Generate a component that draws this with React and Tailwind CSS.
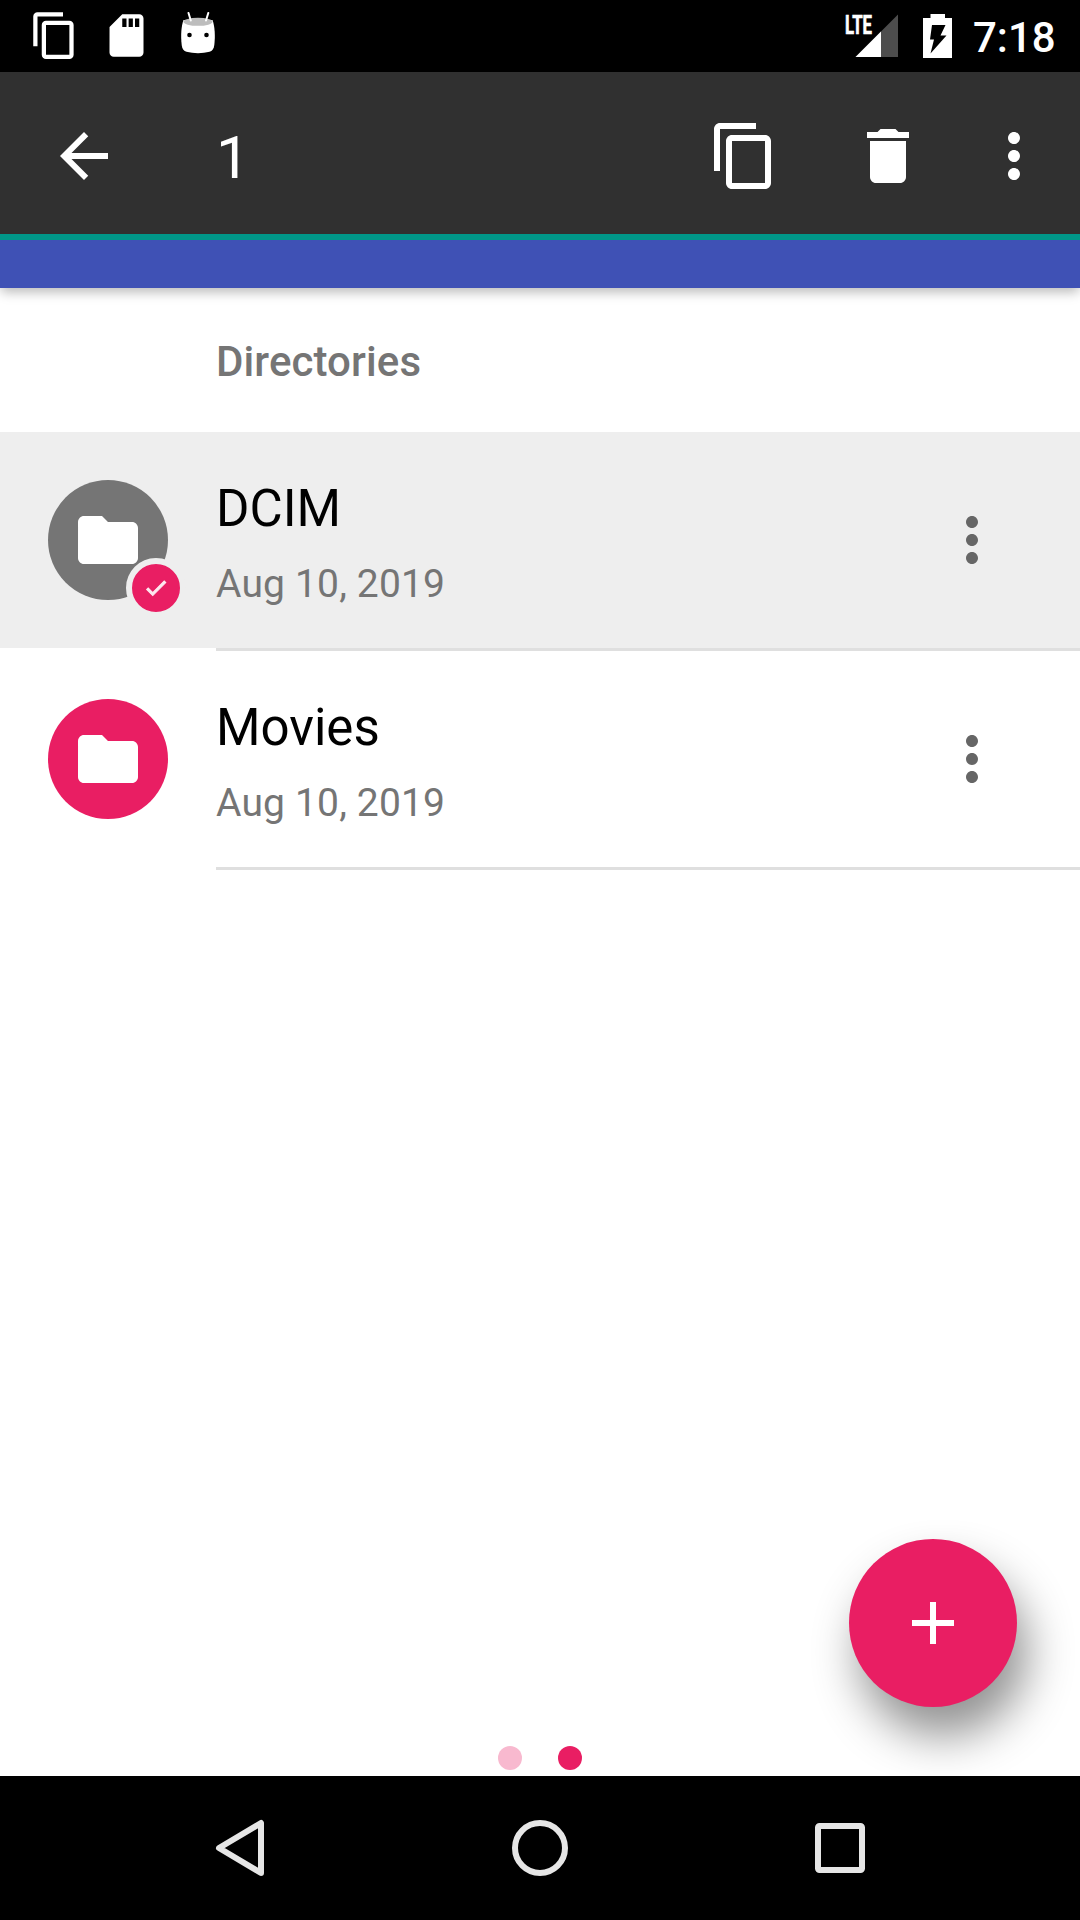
import React from "react";

function Svg({ children, className, box = "0 0 24 24" }) {
  return (
    <svg viewBox={box} fill="currentColor" className={"block shrink-0 " + className}>
      {children}
    </svg>
  );
}

const COPY =
  "M16 1H4c-1.1 0-2 .9-2 2v14h2V3h12V1zm3 4H8c-1.1 0-2 .9-2 2v14c0 1.1.9 2 2 2h11c1.1 0 2-.9 2-2V7c0-1.1-.9-2-2-2zm0 16H8V7h11v14z";
const MORE =
  "M12 8c1.1 0 2-.9 2-2s-.9-2-2-2-2 .9-2 2 .9 2 2 2zm0 2c-1.1 0-2 .9-2 2s.9 2 2 2 2-.9 2-2-.9-2-2-2zm0 6c-1.1 0-2 .9-2 2s.9 2 2 2 2-.9 2-2-.9-2-2-2z";

function StatusBar() {
  return (
    <div className="flex h-[72px] items-center bg-black pl-[28.5px] pr-[24px] text-white">
      <Svg className="mb-px size-[51px]">
        <path d={COPY} />
      </Svg>
      <Svg className="mb-px ml-[21px] size-[51px]">
        <path d="M18 2h-8L4.02 8 4 20c0 1.1.9 2 2 2h12c1.1 0 2-.9 2-2V4c0-1.1-.9-2-2-2zm-6 6h-2V4h2v4zm3 0h-2V4h2v4zm3 0h-2V4h2v4z" />
      </Svg>
      <Svg box="0 0 36 42" className="ml-[28.5px] mb-[6px] h-[42px] w-[36px]">
        <path d="M3.500 8C1.200 14 .6 24 1.700 33c.5 4 2 6 4.800 6.800 7 1.800 16 1.800 23 0 2.800-.8 4.300-2.800 4.800-6.800C35.400 24 34.800 14 32.500 8z" />
        <ellipse cx="18" cy="9.800" rx="14.600" ry="4" fill="#bdbdbd" />
        <path d="M8.500 1l2.300 7.500M28.300 1L26 8.500" stroke="currentColor" strokeWidth="2" strokeLinecap="round" />
        <circle cx="9.500" cy="23" r="2.300" fill="#000" />
        <circle cx="26.500" cy="23" r="2.300" fill="#000" />
      </Svg>
      <div className="flex-1" />
      <Svg box="-3 -14 57 72" className="h-[72px] w-[57px]">
        <path d="M53 0.500V43H10.500z" fill="#4d4d4d" />
        <path d="M36 17.500V43H10.500z" />
        <text
          x="0"
          y="19.500"
          textLength="27"
          lengthAdjust="spacingAndGlyphs"
          fontFamily="Roboto, sans-serif"
          fontWeight="700"
          fontSize="26"
          stroke="currentColor"
          strokeWidth="0.7"
        >
          LTE
        </text>
      </Svg>
      <Svg box="0 0 29 44" className="ml-[24px] h-[44px] w-[29px]">
        <path d="M7.500 0h14.500v4h7v40H0V4h7.500z" />
        <path d="M9 11h13.500l-5 10.500h6L7.500 39.500l3.500-14H7z" fill="#000" />
      </Svg>
      <span className="ml-[21.500px] w-[83px] pt-[4px] text-[42px] font-medium leading-none whitespace-nowrap">7:18</span>
    </div>
  );
}

function ActionBar() {
  return (
    <div className="relative z-10 flex h-[168px] items-start border-b-[6px] border-[#009688] bg-[#303030] pt-12 pl-12 text-white">
      <Svg className="size-[72px]">
        <path d="M20 11H7.830l5.590-5.590L12 4l-8 8 8 8 1.410-1.410L7.830 13H20v-2z" />
      </Svg>
      <span className="ml-24 flex h-[76px] items-center text-[60px] leading-none">1</span>
      <div className="flex-1" />
      <Svg className="size-[72px]">
        <path d={COPY} />
      </Svg>
      <Svg className="ml-[72px] size-[72px]">
        <path d="M6 19c0 1.100.9 2 2 2h8c1.100 0 2-.9 2-2V7H6v12zM19 4h-3.500l-1-1h-5l-1 1H5v2h14V4z" />
      </Svg>
      <Svg className="ml-[54px] mr-[30px] size-[72px]">
        <path d={MORE} />
      </Svg>
    </div>
  );
}

function DirectoryRow({ name, date, selected }) {
  return (
    <div>
      <div className={"flex h-[216px] items-center px-12 " + (selected ? "bg-[#eeeeee]" : "")}>
        <div
          className={
            "relative flex size-[120px] items-center justify-center rounded-full text-white " +
            (selected ? "bg-[#757575]" : "bg-[#e91e63]")
          }
        >
          <Svg className="size-[72px]">
            <path d="M10 4H4c-1.100 0-1.990.9-1.990 2L2 18c0 1.100.9 2 2 2h16c1.100 0 2-.9 2-2V8c0-1.100-.9-2-2-2h-8l-2-2z" />
          </Svg>
          {selected && (
            <span className="absolute left-[78px] top-[78px] flex size-[60px] items-center justify-center rounded-full border-[6px] border-[#eeeeee] bg-[#e91e63]">
              <Svg className="size-[26px] text-[#fde8ef]">
                <path d="M9 16.170L4.830 12l-1.420 1.410L9 19 21 7l-1.410-1.410z" stroke="currentColor" strokeWidth="1" />
              </Svg>
            </span>
          )}
        </div>
        <div className="ml-12 flex-1 pt-[5px]">
          <div className="text-[51px] leading-[60px] text-black">{name}</div>
          <div className="mt-[22px] text-[39px] leading-[46px] tracking-[0.17px] text-[#757575]">{date}</div>
        </div>
        <Svg className="mr-[24px] size-[72px] text-[#666666]">
          <path d={MORE} />
        </Svg>
      </div>
      <div className="ml-[216px] h-[3px] bg-[#dfdfdf]" />
    </div>
  );
}

function NavBar() {
  return (
    <div className="flex h-[144px] items-center justify-between bg-black px-[204px] text-[#e6e6e6]">
      <Svg box="0 0 72 72" className="size-[72px]">
        <path d="M57 11v50L15 36z" fill="none" stroke="currentColor" strokeWidth="6" strokeLinejoin="round" />
      </Svg>
      <Svg box="0 0 72 72" className="size-[72px]">
        <circle cx="36" cy="36" r="25" fill="none" stroke="currentColor" strokeWidth="6" />
      </Svg>
      <Svg box="0 0 72 72" className="size-[72px]">
        <rect x="14" y="14" width="44" height="44" rx="1.500" fill="none" stroke="currentColor" strokeWidth="6" />
      </Svg>
    </div>
  );
}

export default function App() {
  return (
    <div className="flex h-[1920px] w-[1080px] flex-col overflow-hidden bg-white font-['Roboto',sans-serif]">
      <StatusBar />
      <ActionBar />
      <div className="h-12 shrink-0 bg-[#3f51b5] shadow-[0_5px_11px_-1px_rgba(0,0,0,0.28)]" />
      <main className="relative flex flex-1 flex-col">
        <h2 className="flex h-[144px] items-center pt-[4px] pl-[216px] text-[42px] font-medium leading-none tracking-[0.1px] text-[#757575]">
          Directories
        </h2>
        <DirectoryRow name="DCIM" date="Aug 10, 2019" selected />
        <DirectoryRow name="Movies" date="Aug 10, 2019" />
        <div className="mt-auto mb-[6px] flex justify-center gap-9">
          <span className="size-6 rounded-full bg-[#f8b9cf]" />
          <span className="size-6 rounded-full bg-[#e91e63]" />
        </div>
        <button className="absolute right-[63px] bottom-[69px] flex size-[168px] items-center justify-center rounded-full bg-[#e91e63] text-white shadow-[10px_29px_46px_0px_rgba(0,0,0,0.43)]">
          <Svg className="size-[72px]">
            <path d="M19 13h-6v6h-2v-6H5v-2h6V5h2v6h6v2z" />
          </Svg>
        </button>
      </main>
      <NavBar />
    </div>
  );
}
